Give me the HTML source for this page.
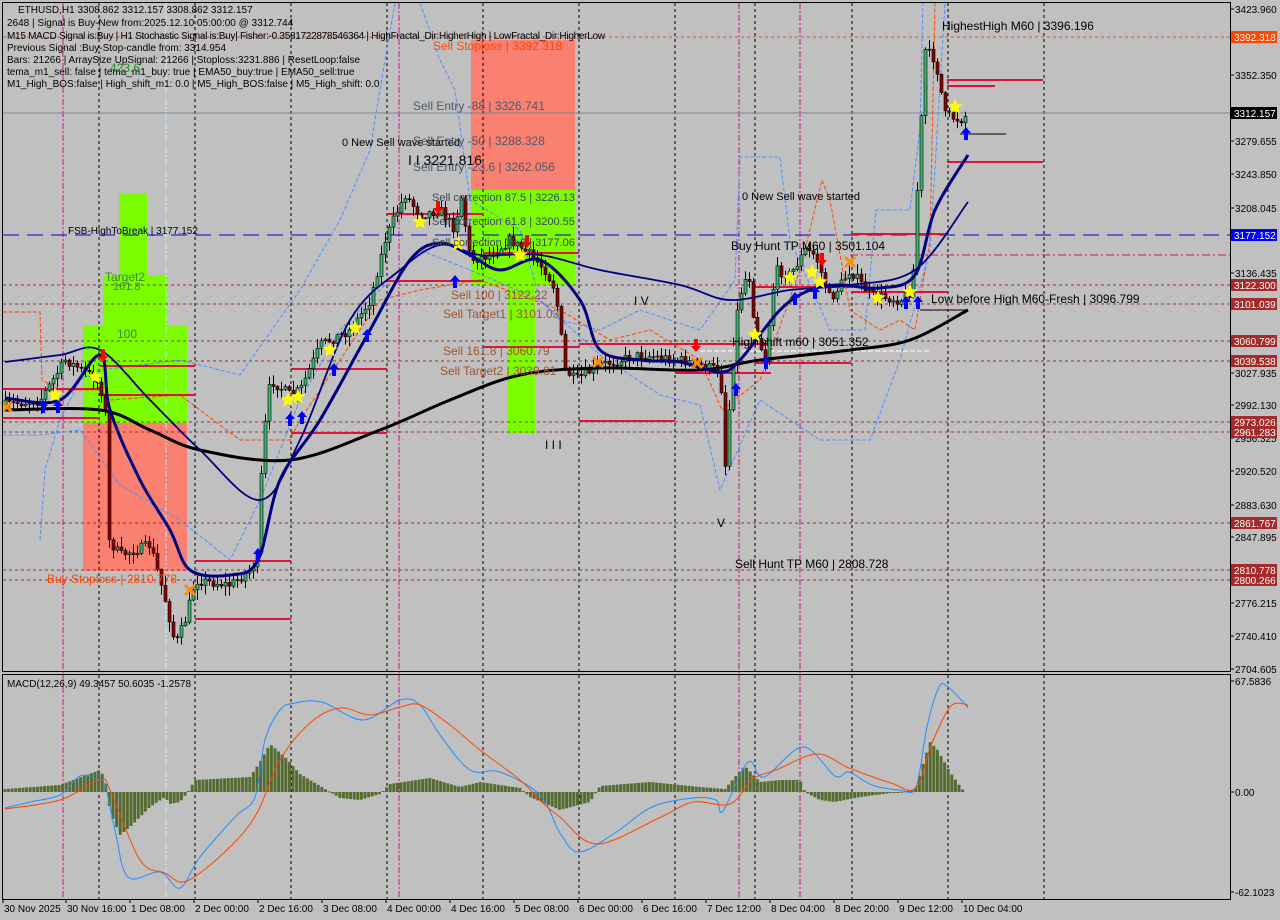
<!DOCTYPE html>
<html><head><meta charset="utf-8"><style>
html,body{margin:0;padding:0;background:#c0c0c0;}
svg{display:block;font-family:"Liberation Sans",sans-serif;}
</style></head><body>
<svg id="s" width="1280" height="920" viewBox="0 0 1280 920" xmlns="http://www.w3.org/2000/svg">
<rect width="1280" height="920" fill="#c0c0c0"/>
<rect x="119" y="193" width="28" height="83" fill="#7cfc00"/>
<rect x="103" y="276" width="64" height="50" fill="#7cfc00"/>
<rect x="83" y="326" width="104" height="97" fill="#7cfc00"/>
<rect x="83" y="423" width="104" height="148" fill="#fa8072"/>
<rect x="471" y="40" width="104" height="150" fill="#fa8072"/>
<rect x="471" y="190" width="104" height="95" fill="#7cfc00"/>
<rect x="508" y="285" width="27" height="148" fill="#7cfc00"/>
<g id="grid"></g>
<g id="ind"></g>
<g id="candles"></g>
<g id="lines"></g>
<g id="macd"></g>
<g id="txt" font-size="11" fill="#000"></g>
<rect x="2.5" y="2.5" width="1228" height="669" fill="none" stroke="#000"/>
<rect x="2.5" y="674.5" width="1228" height="225" fill="none" stroke="#000"/>
</svg>
<script>
var NS="http://www.w3.org/2000/svg";
function el(p,t,a,txt){var e=document.createElementNS(NS,t);for(var k in a)e.setAttribute(k,a[k]);if(txt!==undefined)e.textContent=txt;document.getElementById(p).appendChild(e);return e;}
function interp(P,x){if(x<=P[0][0])return P[0][1];for(var i=1;i<P.length;i++){if(x<=P[i][0]){var a=P[i-1],b=P[i];return a[1]+(b[1]-a[1])*(x-a[0])/(b[0]-a[0]);}}return P[P.length-1][1];}
function pl(P){return P.map(function(p){return p[0]+","+p[1]}).join(" ");}
function smooth(P){var d="M"+P[0][0]+","+P[0][1];for(var i=0;i<P.length-1;i++){var p0=P[i-1]||P[i],p1=P[i],p2=P[i+1],p3=P[i+2]||p2;
var c1x=p1[0]+(p2[0]-p0[0])/6,c1y=p1[1]+(p2[1]-p0[1])/6,c2x=p2[0]-(p3[0]-p1[0])/6,c2y=p2[1]-(p3[1]-p1[1])/6;
d+="C"+c1x.toFixed(1)+","+c1y.toFixed(1)+" "+c2x.toFixed(1)+","+c2y.toFixed(1)+" "+p2[0]+","+p2[1];}return d;}
var seed=7;function rnd(){seed=(seed*16807)%2147483647;return seed/2147483647;}
[99,195,291,387,483,579,675,755,852,948,1044].forEach(function(x){el("grid","line",{x1:x,y1:3,x2:x,y2:899,stroke:"#000","stroke-dasharray":"3,3"});});
[63,399,739,800].forEach(function(x){el("grid","line",{x1:x,y1:3,x2:x,y2:899,stroke:"#c71585","stroke-dasharray":"6,2,2,2"});});
el("grid","line",{x1:166,y1:3,x2:166,y2:899,stroke:"#bfefff","stroke-dasharray":"6,2,2,2"});
[[285,"#a52a2a"],[304,"#a52a2a"],[341,"#a52a2a"],[361,"#a52a2a"],[422,"#a52a2a"],[432,"#a52a2a"],[523,"#a52a2a"],[570,"#a52a2a"],[580,"#a52a2a"],[37,"#ff4500"]].forEach(function(h){el("grid","line",{x1:3,y1:h[0],x2:1230,y2:h[0],stroke:h[1],"stroke-dasharray":"3,3"});});
el("grid","line",{x1:3,y1:235,x2:1230,y2:235,stroke:"#0000cd","stroke-dasharray":"16,8"});
el("grid","line",{x1:3,y1:113,x2:1230,y2:113,stroke:"#778899"});
el("grid","line",{x1:850,y1:255,x2:1230,y2:255,stroke:"#dc143c","stroke-dasharray":"8,3,2,3"});
var bb=[[40,540],[45,470],[60,420],[80,380],[100,370],[180,360],[240,375],[300,290],[340,220],[370,150],[385,60],[395,3]];
el("ind","polyline",{points:pl(bb),fill:"none",stroke:"#4f8fff","stroke-dasharray":"4,2"});
el("ind","polyline",{points:pl([[420,3],[440,60],[455,90],[470,200],[520,230],[540,300],[560,320],[600,330],[640,310],[700,330],[735,280],[740,157],[780,157],[790,240],[830,330],[865,330],[876,210],[910,210],[920,130],[923,3]]),fill:"none",stroke:"#4f8fff","stroke-dasharray":"4,2"});
el("ind","polyline",{points:pl([[3,312],[40,312],[42,380],[60,390],[100,390],[110,400],[180,395],[240,440],[290,440],[300,420],[340,360],[380,300],[420,290],[480,280],[560,310],[610,340],[650,330],[700,360],[722,410],[760,380],[775,340],[800,270],[822,180],[830,200],[850,310],[880,330],[900,320],[915,330],[930,240],[935,3]]),fill:"none",stroke:"#ff4500","stroke-dasharray":"4,2"});
el("ind","polyline",{points:pl([[3,435],[40,435],[80,430],[120,485],[180,520],[230,560],[260,500],[300,400],[340,330],[380,290],[420,250],[470,270],[540,300],[600,355],[660,395],[700,405],[720,490],[760,400],[790,420],[820,440],[870,440],[900,360],[930,250],[945,3]]),fill:"none",stroke:"#4f8fff","stroke-dasharray":"4,2"});
[[3,100,389],[3,100,418],[100,195,366],[100,195,395],[195,291,561],[195,291,619],[291,387,369],[291,387,433],[387,483,214],[387,483,281],[483,579,253],[483,579,347],[579,675,344],[579,675,421],[675,771,344],[675,771,373],[755,851,287],[755,851,363],[851,947,234],[851,947,292],[947,1043,80],[947,1043,162],[947,995,86]].forEach(function(s){el("ind","line",{x1:s[0],y1:s[2],x2:s[1],y2:s[2],stroke:"#dc143c","stroke-width":2});});
el("ind","line",{x1:700,y1:351,x2:930,y2:351,stroke:"#fff","stroke-dasharray":"5,2"});
el("ind","line",{x1:920,y1:310,x2:968,y2:310,stroke:"#000"});
el("ind","line",{x1:960,y1:134,x2:1006,y2:134,stroke:"#000"});
var path=[[5,405],[40,400],[65,360],[90,375],[100,385],[106,420],[108,540],[120,555],[150,545],[165,600],[175,645],[185,620],[195,580],[230,585],[250,570],[258,555],[262,450],[270,380],[290,395],[300,390],[320,345],[350,330],[370,300],[385,240],[395,215],[405,195],[420,215],[440,210],[455,230],[460,190],[470,260],[490,255],[510,240],[530,255],[545,270],[555,290],[565,370],[575,380],[600,365],[640,355],[680,360],[700,365],[720,370],[725,465],[730,395],[738,300],[748,270],[755,330],[765,360],[775,270],[790,275],[805,250],[815,255],[830,300],[850,270],[870,295],[900,300],[912,290],[918,170],[925,50],[935,60],[945,115],[960,120],[966,115]];
var prev=interp(path,3);
for(var x=5;x<=966;x+=4){var c=interp(path,x)+(rnd()-0.5)*10;var o=prev;prev=c;var hi=Math.min(o,c)-rnd()*9-1,lo=Math.max(o,c)+rnd()*9+1;
el("candles","line",{x1:x+0.5,y1:hi,x2:x+0.5,y2:lo,stroke:"#000"});
var bull=c<o;el("candles","rect",{x:x-1,y:Math.min(o,c),width:3,height:Math.max(1,Math.abs(o-c)),fill:bull?"#3cb371":"#8b0000",stroke:"#000","stroke-width":0.6});}
el("lines","path",{d:smooth([[5,410],[100,410],[150,430],[200,450],[290,460],[380,430],[450,400],[520,375],[600,368],[700,370],[760,360],[850,350],[910,340],[968,310]]),fill:"none",stroke:"#000","stroke-width":3});
el("lines","path",{d:smooth([[5,362],[60,355],[100,350],[150,400],[200,450],[260,500],[300,440],[350,320],[400,270],[440,245],[480,255],[540,255],[600,270],[680,285],[730,300],[790,290],[850,285],[915,270],[968,202]]),fill:"none",stroke:"#000080","stroke-width":1.8});
el("lines","path",{d:smooth([[5,398],[60,400],[100,355],[110,410],[140,480],[170,530],[190,570],[230,575],[258,560],[280,480],[320,420],[370,330],[410,260],[440,243],[470,255],[500,270],[540,260],[580,300],[600,350],[640,360],[680,362],[720,372],[740,360],[780,310],[810,290],[840,285],[880,288],[915,275],[935,210],[968,155]]),fill:"none",stroke:"#000080","stroke-width":3});
function star(x,y){var p=[];for(var i=0;i<10;i++){var r=i%2?3.5:8,a=Math.PI/5*i-Math.PI/2;p.push([x+r*Math.cos(a),y+r*Math.sin(a)]);}el("lines","polygon",{points:pl(p),fill:"#ffff00"});}
[[55,395],[95,377],[288,400],[298,397],[330,350],[355,328],[420,222],[458,244],[520,255],[755,335],[790,278],[812,272],[820,282],[878,298],[910,292],[955,107]].forEach(function(s){star(s[0],s[1]);});
function up(x,y){el("lines","path",{d:"M"+x+","+(y-7)+"l-5,6h3v7h4v-7h3z",fill:"#0000ff"});}
function dn(x,y){el("lines","path",{d:"M"+x+","+(y+7)+"l-5,-6h3v-7h4v7h3z",fill:"#ff0000"});}
[[43,407],[58,407],[290,420],[302,418],[334,370],[367,336],[455,282],[258,555],[736,390],[766,363],[795,299],[815,293],[906,303],[918,303],[966,134]].forEach(function(a){up(a[0],a[1]);});
[[103,355],[438,207],[527,241],[696,345],[822,259]].forEach(function(a){dn(a[0],a[1]);});
function xm(x,y){el("lines","path",{d:"M"+(x-5)+","+(y-5)+"L"+(x+5)+","+(y+5)+"M"+(x+5)+","+(y-5)+"L"+(x-5)+","+(y+5),stroke:"#ff8c00","stroke-width":3});}
[[7,407],[190,590],[598,362],[697,363],[850,262]].forEach(function(a){xm(a[0],a[1]);});
var hist=[[5,-3],[60,-7],[100,-22],[104,-15],[108,0],[110,20],[120,43],[130,35],[150,15],[165,5],[170,12],[180,10],[188,0],[195,-12],[250,-15],[260,-30],[270,-48],[285,-35],[300,-18],[330,0],[340,6],[360,8],[380,2],[390,-8],[430,-14],[460,-5],[480,-10],[520,-4],[530,5],[560,18],[590,10],[600,-6],[650,-10],[700,-5],[725,-3],[735,-15],[745,-26],[760,-10],[780,-12],[800,-12],[805,0],[820,8],[835,10],[860,5],[915,-2],[922,-25],[930,-50],[937,-43],[950,-20],[962,-3],[968,2]];
for(var x=5;x<=966;x+=3.6){var h=interp(hist,x);el("macd","rect",{x:x-1.5,y:Math.min(792,792+h),width:3,height:Math.max(1,Math.abs(h)),fill:"#556b2f"});}
var blue=[[5,808],[30,802],[60,795],[80,776],[97,779],[105,785],[115,830],[128,877],[160,872],[180,888],[200,857],[235,817],[255,797],[265,740],[280,710],[295,703],[322,702],[363,720],[400,700],[420,705],[440,735],[470,770],[500,772],[540,795],[560,833],[579,852],[615,833],[652,807],[693,798],[716,800],[723,811],[748,762],[764,777],[803,747],[835,776],[849,772],[872,785],[900,790],[916,787],[927,727],[939,687],[948,687],[964,703],[968,708]];
var org=[[5,809],[60,800],[100,780],[110,790],[140,860],[165,873],[187,881],[230,847],[257,813],[280,760],[310,723],[340,708],[370,715],[400,707],[420,705],[450,725],[480,750],[520,780],[545,805],[560,817],[597,844],[661,817],[693,802],[730,804],[753,779],[776,770],[817,754],[849,768],[891,783],[916,788],[932,743],[950,707],[964,704],[968,706]];
el("macd","path",{d:smooth(blue),fill:"none",stroke:"#1e90ff"});
el("macd","path",{d:smooth(org),fill:"none",stroke:"#ff4500"});
function t(x,y,s,o){o=o||{};var a={x:x,y:y};for(var k in o)a[k]=o[k];el("txt","text",a,s);}
t(18,13,"ETHUSD,H1  3308.862 3312.157 3308.862 3312.157",{"font-size":10});
t(7,26,"2648 | Signal is Buy-New from:2025.12.10 05:00:00 @ 3312.744",{"font-size":10});
t(7,39,"M15 MACD Signal is:Buy | H1 Stochastic Signal is:Buy| Fisher:-0.3581722878546364 | HighFractal_Dir:HigherHigh | LowFractal_Dir:HigherLow",{"font-size":10,textLength:598});
t(7,51,"Previous Signal :Buy-Stop-candle from: 3314.954",{"font-size":10});
t(7,63,"Bars: 21266 | ArraySize UpSignal: 21266 | Stoploss:3231.886 | ResetLoop:false",{"font-size":10});
t(7,75,"tema_m1_sell: false | tema_m1_buy: true | EMA50_buy:true | EMA50_sell:true",{"font-size":10});
t(7,87,"M1_High_BOS:false | High_shift_m1: 0.0 | M5_High_BOS:false | M5_High_shift: 0.0",{"font-size":10});
t(110,72,"423.6",{"font-size":12,fill:"#228b22"});
t(942,30,"HighestHigh   M60 | 3396.196",{"font-size":12});
t(433,50,"Sell Stoploss | 3392.318",{"font-size":12,fill:"#ff4500"});
t(413,110,"Sell Entry -88 | 3326.741",{"font-size":12,fill:"#4a5a6a"});
t(342,146,"0 New Sell wave started",{"font-size":11});
t(413,145,"Sell Entry -50 | 3288.328",{"font-size":12,fill:"#4a5a6a"});
t(408,165,"I I 3221.816",{"font-size":14});
t(413,171,"Sell Entry -23.6 | 3262.056",{"font-size":12,fill:"#4a5a6a"});
t(432,201,"Sell correction 87.5 | 3226.13",{"font-size":11,fill:"#3a4a5a"});
t(432,225,"Sell correction 61.8 | 3200.55",{"font-size":11,fill:"#3a4a5a"});
t(432,246,"Sell correction 38.2 | 3177.06",{"font-size":11,fill:"#3a4a5a"});
t(68,234,"FSB-HighToBreak | 3177.152",{"font-size":10});
t(105,281,"Target2",{"font-size":12,fill:"#3a8a3a"});
t(113,290,"161.8",{"font-size":11,fill:"#3a8a3a"});
t(117,338,"100",{"font-size":12,fill:"#3a8a3a"});
t(451,299,"Sell 100 | 3122.22",{"font-size":12,fill:"#a0522d"});
t(443,318,"Sell Target1 | 3101.03",{"font-size":12,fill:"#a0522d"});
t(443,355,"Sell 161.8 | 3060.79",{"font-size":12,fill:"#a0522d"});
t(440,375,"Sell Target2 | 3039.81",{"font-size":12,fill:"#a0522d"});
t(634,305,"I V",{"font-size":12});
t(545,449,"I I I",{"font-size":12});
t(717,527,"V",{"font-size":12});
t(742,200,"0 New Sell wave started",{"font-size":11});
t(731,250,"Buy Hunt TP M60 | 3501.104",{"font-size":12});
t(931,303,"Low before High   M60-Fresh | 3096.799",{"font-size":12});
t(732,346,"High shift m60 | 3051.352",{"font-size":12});
t(735,568,"Sell Hunt TP M60 | 2808.728",{"font-size":12});
t(47,583,"Buy Stoploss | 2810.778",{"font-size":12,fill:"#ff4500"});
t(7,687,"MACD(12,26,9) 49.3457 50.6035 -1.2578",{"font-size":10});
[[9,"3423.960"],[75,"3352.350"],[141,"3279.655"],[174,"3243.850"],[208,"3208.045"],[273,"3136.435"],[373,"3027.935"],[405,"2992.130"],[438,"2956.325"],[471,"2920.520"],[505,"2883.630"],[537,"2847.895"],[603,"2776.215"],[636,"2740.410"],[669,"2704.605"],[681,"67.5836"],[792,"0.00"],[892,"-62.1023"]].forEach(function(a){el("txt","line",{x1:1230,y1:a[0],x2:1234,y2:a[0],stroke:"#000"});t(1235,a[0]+4,a[1],{"font-size":10});});
[[37,"3392.318","#ff4500"],[113,"3312.157","#000"],[235,"3177.152","#0000ff"],[285,"3122.300","#a52a2a"],[304,"3101.039","#a52a2a"],[341,"3060.799","#a52a2a"],[361,"3039.538","#a52a2a"],[422,"2973.026","#a52a2a"],[432,"2961.283","#a52a2a"],[523,"2861.767","#a52a2a"],[570,"2810.778","#a52a2a"],[580,"2800.266","#a52a2a"]].forEach(function(a){el("txt","rect",{x:1231,y:a[0]-6,width:46,height:12,fill:a[2]});t(1234,a[0]+4,a[1],{"font-size":10,fill:"#fff"});});
[[3,"30 Nov 2025"],[66,"30 Nov 16:00"],[130,"1 Dec 08:00"],[194,"2 Dec 00:00"],[258,"2 Dec 16:00"],[322,"3 Dec 08:00"],[386,"4 Dec 00:00"],[450,"4 Dec 16:00"],[514,"5 Dec 08:00"],[578,"6 Dec 00:00"],[642,"6 Dec 16:00"],[706,"7 Dec 12:00"],[770,"8 Dec 04:00"],[834,"8 Dec 20:00"],[898,"9 Dec 12:00"],[962,"10 Dec 04:00"]].forEach(function(a){el("txt","line",{x1:a[0],y1:899,x2:a[0],y2:903,stroke:"#000"});t(a[0]+1,912,a[1],{"font-size":10});});
</script>
</body></html>
